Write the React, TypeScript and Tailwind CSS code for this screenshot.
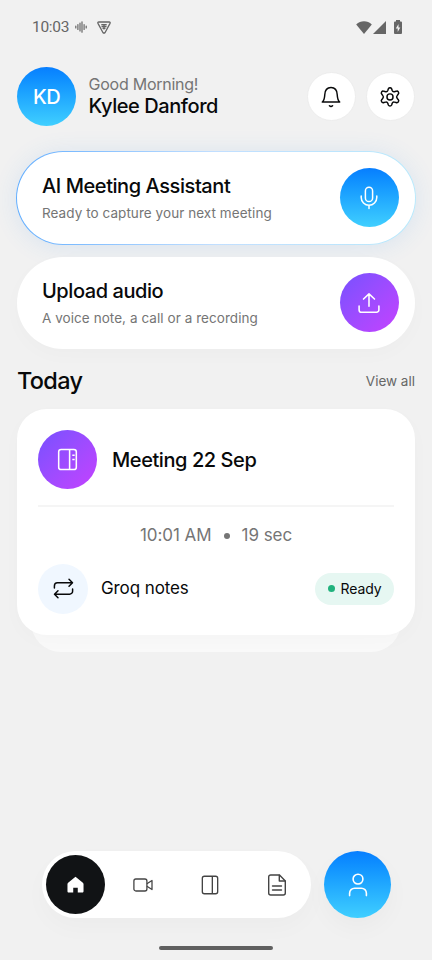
import React from 'react';

interface IconProps {
  className?: string;
}

const BellIcon: React.FC<IconProps> = ({ className }) => (
  <svg viewBox="0 0 24 24" className={className} fill="none" stroke="currentColor" strokeWidth="1.6" strokeLinecap="round" strokeLinejoin="round">
    <path d="M2.500 17.500h19c-1.800-1.500-2.500-3.800-2.700-7.900C18.600 4.500 16.200 1.700 12 1.700S5.400 4.500 5.200 9.600c-.2 4.100-.9 6.400-2.700 7.900Z" />
    <path d="M10.300 21.600c1 .9 2.400.9 3.400 0" />
  </svg>
);

const GearIcon: React.FC<IconProps> = ({ className }) => (
  <svg viewBox="0 -0.9 24 24" className={className} fill="none" stroke="currentColor" strokeWidth="1.6" strokeLinecap="round" strokeLinejoin="round">
    <path d="M10.200 2.200a2 2 0 0 1 3.600 0l.6 1.900a2 2 0 0 0 2.300 1.200l1.900-.4a2 2 0 0 1 2.300 3.200l-1.100 1.500a2.200 2.200 0 0 0 0 2.800l1.100 1.500a2 2 0 0 1-2.300 3.200l-1.900-.4a2 2 0 0 0-2.300 1.200l-.6 1.900a2 2 0 0 1-3.600 0l-.6-1.900a2 2 0 0 0-2.300-1.200l-1.900.4a2 2 0 0 1-2.300-3.200l1.100-1.500a2.200 2.200 0 0 0 0-2.800l-1.100-1.500a2 2 0 0 1 2.300-3.200l1.900.4a2 2 0 0 0 2.300-1.200Z" />
    <circle cx="12" cy="11" r="3.300" />
  </svg>
);

const MicIcon: React.FC<IconProps> = ({ className }) => (
  <svg viewBox="0 0 24 24" className={className} fill="none" stroke="currentColor" strokeWidth="1.5" strokeLinecap="round">
    <rect x="8.400" y="1.300" width="7.200" height="14.200" rx="3.600" />
    <path d="M4.200 10v1.500a7.800 7.800 0 0 0 15.600 0V10M12 19.300v3.200" />
  </svg>
);

const UploadIcon: React.FC<IconProps> = ({ className }) => (
  <svg viewBox="0 0 24 24" className={className} fill="none" stroke="currentColor" strokeWidth="1.700" strokeLinecap="round" strokeLinejoin="round">
    <path d="M12 15.500V2M6 7.700 12 2l6 5.700M1.200 15.300v4.200a2.500 2.500 0 0 0 2.500 2.500h16.600a2.500 2.500 0 0 0 2.500-2.500v-4.200" />
  </svg>
);

const NotebookIcon: React.FC<IconProps & { detailed?: boolean }> = ({ className, detailed }) => (
  <svg viewBox="0 0 24 24" className={className} fill="none" stroke="currentColor" strokeWidth="1.600">
    <rect x="2.800" y="1.500" width="18.400" height="21" rx="2.500" />
    <path d={detailed ? 'M14.200 1.500v21' : 'M14.800 1.500v21'} />
    {detailed && <path d="M17 7.500h2.500M17 12h2.500" />}
  </svg>
);

const RepeatIcon: React.FC<IconProps> = ({ className }) => (
  <svg viewBox="0 0 24 24" className={className} fill="none" stroke="currentColor" strokeWidth="1.700" strokeLinecap="round" strokeLinejoin="round">
    <path d="M1.600 11.500V9a3.500 3.500 0 0 1 3.500-3.500h16.800M18.300 1.500l4 4-4 4M22.400 12.500V15a3.500 3.500 0 0 1-3.500 3.500H2.100M5.700 14.500l-4 4 4 4" />
  </svg>
);

const HomeIcon: React.FC<IconProps> = ({ className }) => (
  <svg viewBox="0 0 18 18" className={className} fill="currentColor">
    <path d="M9 .8 1.200 7.100c-.5.400-.7.900-.7 1.500v7.600c0 .8.500 1.300 1.300 1.300h4.800v-5h4.800v5h4.800c.8 0 1.300-.5 1.300-1.300V8.600c0-.6-.2-1.100-.7-1.500Z" />
  </svg>
);

const VideoIcon: React.FC<IconProps> = ({ className }) => (
  <svg viewBox="0 0 20 20" className={className} fill="none" stroke="currentColor" strokeWidth="1.300" strokeLinejoin="round">
    <rect x=".9" y="4" width="13" height="12" rx="2" />
    <path d="m13.900 8.700 5.100-3.200v9l-5.100-3.200" />
  </svg>
);

const FileIcon: React.FC<IconProps> = ({ className }) => (
  <svg viewBox="0 0 22 22" className={className} fill="none" stroke="currentColor" strokeWidth="1.400" strokeLinecap="round" strokeLinejoin="round">
    <path d="M13.500 1H4.700a2 2 0 0 0-2 2v16a2 2 0 0 0 2 2h12.600a2 2 0 0 0 2-2V7Z" />
    <path d="M13.300 1.200V7h5.800M6.500 12h9M6.500 16h9" />
  </svg>
);

const PersonIcon: React.FC<IconProps> = ({ className }) => (
  <svg viewBox="0 0 24 24" className={className} fill="none" stroke="currentColor" strokeWidth="1.600" strokeLinecap="round">
    <circle cx="12" cy="6.100" r="4.900" />
    <path d="M3.600 22.600v-2.400a5 5 0 0 1 5-5h6.800a5 5 0 0 1 5 5v2.400" />
  </svg>
);

const StatusBar = () => (
  <div className="flex h-[54px] items-center pr-[29px] pl-[32px] text-[#666]">
    <span className="relative top-px w-[37px] font-['Roboto'] text-[15.500px] leading-none tracking-[-0.300px]">10:03</span>
    <svg viewBox="0 0 12 12" className="ml-[6px] h-3 w-3" fill="none" stroke="currentColor" strokeWidth="1.200" strokeLinecap="round">
      <path d="M.8 5v2M2.900 3.500v5M5 2v8M7 .8v10.400M9.100 3.500v5M11.200 5v2" />
    </svg>
    <svg viewBox="0 0 14 13" className="ml-[10px] h-[13px] w-[14px]" fill="none" stroke="currentColor" strokeWidth="1.300" strokeLinejoin="round">
      <path d="M2 1h10q1.700 0 .9 1.600L8.100 11.500q-1.100 1.300-2.200 0L1.100 2.600Q.3 1 2 1Z" />
      <path d="M4.300 3.600h5.400M4.500 5.500h5M5.500 7.400h3M7 3.500v5" />
    </svg>
    <svg viewBox="0 0 16 13" className="ml-auto h-[13px] w-4" fill="currentColor">
      <path d="M8 13 .2 3.500C4.500-.9 11.500-.9 15.800 3.500Z" />
    </svg>
    <svg viewBox="0 0 13 13" className="ml-px h-[13px] w-[13px]" fill="currentColor">
      <path d="M13 0v13H0Z" />
    </svg>
    <svg viewBox="0 0 10 14" className="ml-[7px] h-[14px] w-[10px]" fill="currentColor">
      <path d="M3 0h4v1.500h1q1 0 1 1V13q0 1-1 1H2q-1 0-1-1V2.500q0-1 1-1h1Z" />
      <path fill="#f1f1f1" d="M5.500 4 2.800 8.400h1.900V12l2.600-4.500H5.500Z" />
    </svg>
  </div>
);

interface ActionCardProps {
  title: string;
  subtitle: string;
  children: React.ReactNode;
}

const ActionContent: React.FC<ActionCardProps> = ({ title, subtitle, children }) => (
  <>
    <div>
      <h2 className="text-[20px] leading-[26px] font-medium tracking-[-0.430px]">{title}</h2>
      <p className="mt-[5px] text-[13.500px] leading-[18px] tracking-[0.060px] text-[#757575]">{subtitle}</p>
    </div>
    {children}
  </>
);

const App: React.FC = () => {
  return (
    <div className="flex h-[960px] w-[432px] flex-col overflow-hidden bg-[#f1f1f1] font-['Inter',sans-serif] text-[#08090a]">
      <StatusBar />

      <header className="mt-[13px] flex h-[59px] items-center px-[17px]">
        <div className="flex h-[59px] w-[59px] items-center justify-center rounded-full bg-linear-to-b from-[#087eff] to-[#40cfff] text-[20px] font-medium tracking-[-0.500px] text-white">
          KD
        </div>
        <div className="-mt-[3px] ml-[12.500px]">
          <p className="text-[16px] leading-[22px] tracking-[-0.250px] text-[#757575]">Good Morning!</p>
          <p className="text-[20px] leading-[22px] font-medium tracking-[-0.430px]">Kylee Danford</p>
        </div>
        <div className="mr-[0.500px] ml-auto flex gap-[10px]">
          <button className="flex h-[49px] w-[49px] items-center justify-center rounded-full border border-[#ededed] bg-white">
            <BellIcon className="h-[22px] w-[22px]" />
          </button>
          <button className="flex h-[49px] w-[49px] items-center justify-center rounded-full border border-[#ededed] bg-white">
            <GearIcon className="h-[22px] w-[22px]" />
          </button>
        </div>
      </header>

      <main className="px-[17px]">
        <section className="-mx-px mt-[24.500px] rounded-full bg-linear-to-r from-[#60adff] via-[#c2dfff] via-50% to-[#b9e9fc] p-px shadow-[0_2px_24px_rgba(50,140,240,0.120)]">
          <div className="flex h-[92px] items-center justify-between rounded-full bg-white pr-[16.500px] pl-[25px]">
            <ActionContent title="AI Meeting Assistant" subtitle="Ready to capture your next meeting">
              <div className="flex h-[59px] w-[59px] items-center justify-center rounded-full bg-linear-to-b from-[#087eff] to-[#40cfff] text-white">
                <MicIcon className="h-6 w-6" />
              </div>
            </ActionContent>
          </div>
        </section>

        <section className="relative mt-[12px] flex h-[92.500px] items-center justify-between rounded-full bg-white pr-[16.500px] pl-[25px] shadow-[0_6px_20px_rgba(0,0,0,0.020)]">
          <ActionContent title="Upload audio" subtitle="A voice note, a call or a recording">
            <div className="flex h-[59px] w-[59px] items-center justify-center rounded-full bg-linear-to-br from-[#7650ff] to-[#c440ff] text-white">
              <UploadIcon className="h-[22px] w-[22px]" />
            </div>
          </ActionContent>
        </section>

        <div className="mt-[17px] flex h-[30px] items-center justify-between">
          <h2 className="text-[23.500px] font-medium tracking-[-0.700px]">Today</h2>
          <span className="text-[13.500px] text-[#666]">View all</span>
        </div>

        <section className="mt-[13px]">
          <div className="relative h-[226px] rounded-[30px] bg-white px-[21px] pt-[21px] shadow-[0_6px_20px_rgba(0,0,0,0.020)]">
            <div className="flex items-center">
              <div className="flex h-[59px] w-[59px] items-center justify-center rounded-full bg-linear-to-br from-[#7650ff] to-[#c440ff] text-white">
                <NotebookIcon detailed className="h-[23px] w-[23px]" />
              </div>
              <h3 className="ml-[15px] text-[20px] font-medium tracking-[-0.430px]">Meeting 22 Sep</h3>
            </div>
            <div className="mt-[16px] h-[1.500px] bg-[#f5f5f5]" />
            <div className="mt-[17px] flex h-6 items-center justify-center text-[17px] tracking-[-0.050px] text-[#757575]">
              <span>10:01 AM</span>
              <span className="mx-3 h-[6px] w-[6px] rounded-full bg-[#757575]" />
              <span>19 sec</span>
            </div>
            <div className="mt-[16px] flex items-center">
              <div className="flex h-[50px] w-[50px] items-center justify-center rounded-full bg-[#f0f7ff]">
                <RepeatIcon className="h-[21px] w-[21px]" />
              </div>
              <span className="ml-[13px] text-[17px] tracking-[-0.100px]">Groq notes</span>
              <span className="ml-auto flex h-8 w-[79px] items-center justify-center rounded-full bg-[#e6f7f2] text-[14px] tracking-[-0.100px]">
                <span className="mr-[6px] h-[7px] w-[7px] rounded-full bg-[#20b27d]" />
                Ready
              </span>
            </div>
          </div>
          <div className="mx-[14px] -mt-[30px] h-[47px] rounded-b-[30px] bg-[#f9f9f9]" />
        </section>
      </main>

      <nav className="mt-auto flex justify-between pr-[41px] pl-[42px]">
        <div className="flex h-[67px] w-[269px] items-center rounded-full bg-white pl-1 text-[#444] shadow-[0_10px_25px_rgba(0,0,0,0.025)]">
          <div className="flex h-[59px] w-[59px] items-center justify-center rounded-full bg-[#111315] text-white">
            <HomeIcon className="h-[17px] w-[17px]" />
          </div>
          <div className="ml-1 flex w-[67px] justify-center">
            <VideoIcon className="h-5 w-5" />
          </div>
          <div className="flex w-[67px] justify-center">
            <NotebookIcon className="h-5 w-5" />
          </div>
          <div className="flex w-[67px] justify-center">
            <FileIcon className="h-[22px] w-[22px]" />
          </div>
        </div>
        <button className="flex h-[67px] w-[67px] items-center justify-center rounded-full bg-linear-to-b from-[#087eff] to-[#40cfff] text-white shadow-[0_10px_25px_rgba(0,0,0,0.030)]">
          <PersonIcon className="h-6 w-6" />
        </button>
      </nav>
      <div className="mx-auto mt-[27.500px] mb-[10.500px] h-1 w-[114px] shrink-0 rounded-full bg-[#606060]" />
    </div>
  );
};

export default App;
